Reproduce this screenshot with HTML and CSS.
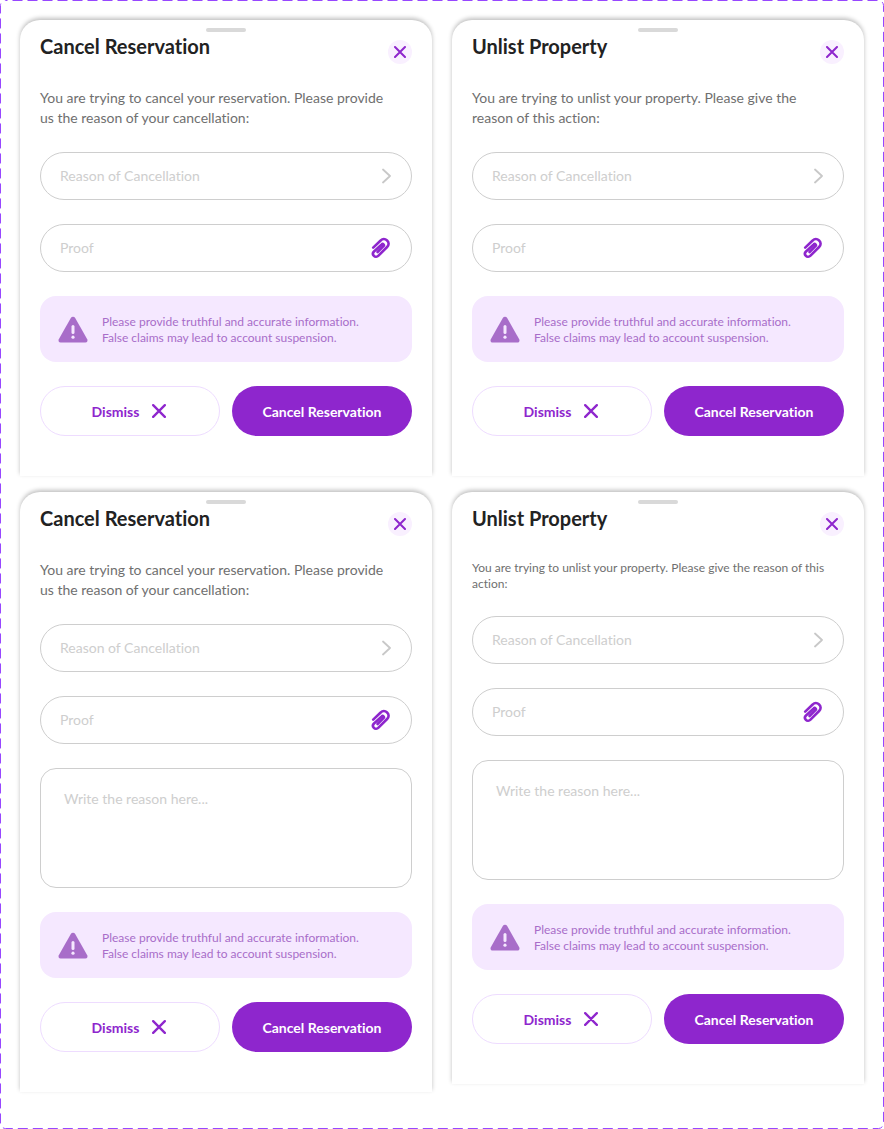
FILE: index.html
```html
<!DOCTYPE html>
<html lang="en">
<head>
<meta charset="utf-8">
<meta name="viewport" content="width=device-width, initial-scale=1">
<title>Reservation sheets</title>
<link rel="stylesheet" href="styles.css">
</head>
<body>
<svg class="symbols" aria-hidden="true">
  <symbol id="close" viewBox="0 0 12 12"><path d="M1 1l10 10M11 1L1 11" fill="none" stroke="currentColor" stroke-width="2" stroke-linecap="round"/></symbol>
  <symbol id="chevron" viewBox="0 0 10 16"><path d="M2 1.5l7 6.5-7 6.5" fill="none" stroke="currentColor" stroke-width="1.8" stroke-linecap="round" stroke-linejoin="round"/></symbol>
  <symbol id="clip" viewBox="0 0 20 22"><path d="M2.2 10.6L9.4 3.7C11.5 1.7 14.2 1.7 16.1 3.5C18.1 5.4 18.1 8 16.1 10L7.5 18.6C6.1 20 4.1 20.1 2.9 18.9C1.7 17.7 1.7 15.8 3 14.5L10.7 7.4C11.2 6.9 12 6.9 12.5 7.4C13 7.9 13 8.7 12.5 9.2L6.6 15" fill="none" stroke="currentColor" stroke-width="2.6" stroke-linecap="round" stroke-linejoin="round"/></symbol>
  <symbol id="warning" viewBox="0 0 30 28"><path d="M12.8 2c1-1.6 3.4-1.6 4.4 0l12 21.2c.8 1.5 0 3.3-1.8 3.3H2.6c-1.8 0-2.6-1.8-1.8-3.3z" fill="#a86dc9"/><path d="M15 10.5v6" stroke="#f5e8ff" stroke-width="3" stroke-linecap="round"/><circle cx="15" cy="21.2" r="1.6" fill="#f5e8ff"/></symbol>
</svg>
<main class="board">
  <svg class="outline" aria-hidden="true"><rect class="outline-rect" x="0.5" y="0.5" rx="5"/></svg>

  <section class="sheet" aria-labelledby="t1">
    <div class="handle"></div>
    <header class="sheet-header"><h2 class="title" id="t1">Cancel Reservation</h2><button class="close" type="button" aria-label="Close"><svg class="x-icon"><use href="#close"/></svg></button></header>
    <p class="intro">You are trying to cancel your reservation. Please provide us the reason of your cancellation:</p>
    <div class="field"><select class="control" aria-label="Reason of Cancellation"><option>Reason of Cancellation</option></select><svg class="chevron"><use href="#chevron"/></svg></div>
    <div class="field"><input class="control" type="text" placeholder="Proof" aria-label="Proof"><button class="attach" type="button" aria-label="Attach proof"><svg class="clip"><use href="#clip"/></svg></button></div>
    <div class="alert"><svg class="warning"><use href="#warning"/></svg><p class="alert-text">Please provide truthful and accurate information. False claims may lead to account suspension.</p></div>
    <div class="actions"><button class="btn btn-outline" type="button">Dismiss<svg class="x-icon x-large"><use href="#close"/></svg></button><button class="btn btn-solid" type="button">Cancel Reservation</button></div>
  </section>

  <section class="sheet" aria-labelledby="t2">
    <div class="handle"></div>
    <header class="sheet-header"><h2 class="title" id="t2">Unlist Property</h2><button class="close" type="button" aria-label="Close"><svg class="x-icon"><use href="#close"/></svg></button></header>
    <p class="intro">You are trying to unlist your property. Please give the reason of this action:</p>
    <div class="field"><select class="control" aria-label="Reason of Cancellation"><option>Reason of Cancellation</option></select><svg class="chevron"><use href="#chevron"/></svg></div>
    <div class="field"><input class="control" type="text" placeholder="Proof" aria-label="Proof"><button class="attach" type="button" aria-label="Attach proof"><svg class="clip"><use href="#clip"/></svg></button></div>
    <div class="alert"><svg class="warning"><use href="#warning"/></svg><p class="alert-text">Please provide truthful and accurate information. False claims may lead to account suspension.</p></div>
    <div class="actions"><button class="btn btn-outline" type="button">Dismiss<svg class="x-icon x-large"><use href="#close"/></svg></button><button class="btn btn-solid" type="button">Cancel Reservation</button></div>
  </section>

  <section class="sheet" aria-labelledby="t3">
    <div class="handle"></div>
    <header class="sheet-header"><h2 class="title" id="t3">Cancel Reservation</h2><button class="close" type="button" aria-label="Close"><svg class="x-icon"><use href="#close"/></svg></button></header>
    <p class="intro">You are trying to cancel your reservation. Please provide us the reason of your cancellation:</p>
    <div class="field"><select class="control" aria-label="Reason of Cancellation"><option>Reason of Cancellation</option></select><svg class="chevron"><use href="#chevron"/></svg></div>
    <div class="field"><input class="control" type="text" placeholder="Proof" aria-label="Proof"><button class="attach" type="button" aria-label="Attach proof"><svg class="clip"><use href="#clip"/></svg></button></div>
    <textarea class="reason" placeholder="Write the reason here..." aria-label="Reason"></textarea>
    <div class="alert"><svg class="warning"><use href="#warning"/></svg><p class="alert-text">Please provide truthful and accurate information. False claims may lead to account suspension.</p></div>
    <div class="actions"><button class="btn btn-outline" type="button">Dismiss<svg class="x-icon x-large"><use href="#close"/></svg></button><button class="btn btn-solid" type="button">Cancel Reservation</button></div>
  </section>

  <section class="sheet" aria-labelledby="t4">
    <div class="handle"></div>
    <header class="sheet-header"><h2 class="title" id="t4">Unlist Property</h2><button class="close" type="button" aria-label="Close"><svg class="x-icon"><use href="#close"/></svg></button></header>
    <p class="intro intro-small">You are trying to unlist your property. Please give the reason of this action:</p>
    <div class="field"><select class="control" aria-label="Reason of Cancellation"><option>Reason of Cancellation</option></select><svg class="chevron"><use href="#chevron"/></svg></div>
    <div class="field"><input class="control" type="text" placeholder="Proof" aria-label="Proof"><button class="attach" type="button" aria-label="Attach proof"><svg class="clip"><use href="#clip"/></svg></button></div>
    <textarea class="reason" placeholder="Write the reason here..." aria-label="Reason"></textarea>
    <div class="alert"><svg class="warning"><use href="#warning"/></svg><p class="alert-text">Please provide truthful and accurate information. False claims may lead to account suspension.</p></div>
    <div class="actions"><button class="btn btn-outline" type="button">Dismiss<svg class="x-icon x-large"><use href="#close"/></svg></button><button class="btn btn-solid" type="button">Cancel Reservation</button></div>
  </section>
</main>
</body>
</html>
```
FILE: styles.css
```css
* { box-sizing: border-box; }

body {
  margin: 0;
  background: #fff;
  color: #222;
  font-family: Lato, "Open Sans", sans-serif;
  font-variant-ligatures: none;
}

button, input, select, textarea { font: inherit; font-variant-ligatures: none; }

.symbols { display: none; }

.board {
  position: relative;
  display: grid;
  grid-template-columns: repeat(auto-fit, minmax(360px, 1fr));
  align-items: start;
  align-content: start;
  gap: 16px 20px;
  min-height: 100vh;
  padding: 20px;
}

/* Dashed frame around the whole board */
.outline {
  position: absolute;
  inset: 0;
  width: 100%;
  height: 100%;
  pointer-events: none;
}

.outline-rect {
  width: calc(100% - 1px);
  height: calc(100% - 1px);
  fill: none;
  stroke: #9747ff;
  stroke-dasharray: 10 5;
  stroke-dashoffset: 8;
}

.sheet {
  display: flex;
  flex-direction: column;
  gap: 24px;
  padding: 8px 20px 40px;
  background: #fff;
  border-radius: 20px 20px 0 0;
  box-shadow: 0 -2px 4px rgba(0, 0, 0, 0.25);
}

.handle {
  align-self: center;
  width: 40px;
  height: 4px;
  margin-bottom: -24px;
  border-radius: 2px;
  background: #d9d9d9;
}

.sheet-header {
  display: flex;
  justify-content: space-between;
  align-items: flex-end;
  height: 32px;
}

.title {
  align-self: flex-start;
  margin: 0;
  font-size: 20px;
  line-height: 28px;
  font-weight: 700;
}

.close {
  display: grid;
  place-items: center;
  width: 24px;
  height: 24px;
  padding: 0;
  border: 0;
  border-radius: 50%;
  background: #f9f0ff;
  color: #8e26cd;
}

.x-icon { width: 12px; height: 12px; }
.x-large { width: 14px; height: 14px; }

.intro {
  max-width: 360px;
  margin: 0;
  color: #6f6f6f;
  font-size: 14px;
  line-height: 20px;
}

.intro-small { font-size: 12px; line-height: 16px; }

.field {
  display: flex;
  align-items: center;
  height: 48px;
  padding: 0 20px 0 19px;
  border: 1px solid #cecece;
  border-radius: 24px;
}

.control {
  flex: 1;
  min-width: 0;
  padding: 0;
  border: 0;
  outline: 0;
  background: none;
  appearance: none;
  color: #cecece;
  font-size: 14px;
  line-height: 20px;
}

.control::placeholder, .reason::placeholder { color: #cecece; opacity: 1; }

.chevron { width: 10px; height: 16px; color: #c8c8c8; }

.attach {
  display: flex;
  padding: 0;
  border: 0;
  background: none;
  color: #8e26cd;
}

.clip { width: 20px; height: 22px; }

.reason {
  display: block;
  height: 120px;
  padding: 20px 23px;
  border: 1px solid #cecece;
  border-radius: 16px;
  outline: 0;
  resize: none;
  font-size: 14px;
  line-height: 20px;
}

.alert {
  display: flex;
  align-items: center;
  gap: 14px;
  min-height: 66px;
  padding: 18px 18px 16px;
  border-radius: 16px;
  background: #f5e8ff;
}

.warning { flex: none; width: 30px; height: 28px; }

.alert-text {
  max-width: 280px;
  margin: 0;
  color: #a86dc9;
  font-size: 12px;
  line-height: 16px;
}

.actions {
  display: grid;
  grid-template-columns: 1fr 1fr;
  gap: 12px;
}

.btn {
  display: flex;
  align-items: center;
  justify-content: center;
  gap: 13px;
  height: 50px;
  padding: 0 12px;
  border: 0;
  border-radius: 25px;
  font-size: 14px;
  font-weight: 700;
}

.btn-outline { padding-right: 14px; border: 1px solid #eedcff; background: #fff; color: #8e26cd; }
.btn-solid { background: #8e26cd; color: #fff; }
```
